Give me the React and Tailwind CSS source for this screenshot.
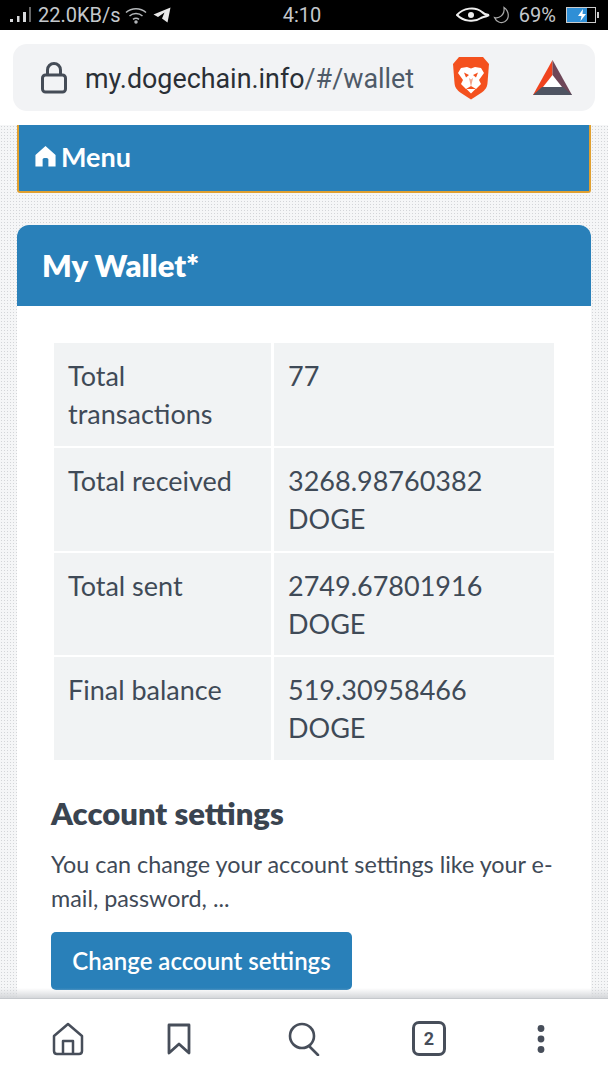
const rows = [
  ["Total transactions", "77"],
  ["Total received", "3268.98760382 DOGE"],
  ["Total sent", "2749.67801916 DOGE"],
  ["Final balance", "519.30958466 DOGE"],
];

function StatusBar() {
  return (
    <div className="h-[30px] shrink-0 bg-black text-[#c4c8cc] flex items-center justify-between pl-[9px] pr-[9px] text-[20px] font-['Roboto',sans-serif]">
      <div className="flex items-center w-[240px]">
        {/* signal */}
        <svg width="24" height="18" viewBox="0 0 24 18" className="mr-[5px]">
          <rect x="1" y="13" width="3" height="3" fill="#d8dadc" />
          <rect x="8" y="10" width="2.5" height="6" fill="#d8dadc" />
          <rect x="14" y="6" width="3" height="10" fill="#d8dadc" />
          <rect x="20" y="1" width="2" height="15" fill="#666" />
        </svg>
        <span>22.0KB/s</span>
        {/* wifi */}
        <svg width="22" height="18" viewBox="0 0 22 18" fill="none" stroke="#b5b8bb" strokeWidth="1.5" className="ml-[4px]">
          <path d="M1 6.5C6.5 1.5 15.5 1.5 21 6.5" />
          <path d="M4.5 10c3.6-3.2 9.4-3.2 13 0" />
          <path d="M8 13.4c1.7-1.4 4.3-1.4 6 0" />
          <circle cx="11" cy="16" r="1" fill="#b5b8bb" />
        </svg>
        {/* telegram */}
        <svg width="18" height="16" viewBox="0 0 18 16" className="ml-[6px]">
          <path d="M0.5 7.5L17.5 0.5L14.5 15.5L9 11.5L11.5 5.5L5 10Z" fill="#e8e8e8" />
        </svg>
      </div>
      <span className="-ml-[4px]">4:10</span>
      <div className="flex items-center justify-end w-[240px]">
        {/* eye */}
        <svg width="34" height="18" viewBox="0 0 34 18" fill="none" stroke="#eee" strokeWidth="2">
          <path d="M1 9C7 2 19 0 26 6C28 8 30 9 33 9C29 11 27 11 25 12C18 17 7 15 1 9Z" />
          <circle cx="15" cy="9" r="3" fill="#eee" stroke="none" />
        </svg>
        <svg width="18" height="18" viewBox="0 0 18 18" fill="none" stroke="#aaa" strokeWidth="1.2" className="ml-[3px]">
          <path d="M11 1.5C16 5 17 12 12 15.5C8 18 3 15.5 1.5 11.5C6 13 12 9 11 1.5Z" />
        </svg>
        <span className="ml-[8px]">69%</span>
        {/* battery */}
        <div className="flex items-center ml-[10px]">
          <div className="relative w-[30px] h-[16px] border border-[#ccc] bg-black">
            <div className="h-full w-[20px] bg-[#2f8fd6]" />
            <svg width="10" height="12" viewBox="0 0 10 12" className="absolute left-[10px] top-[1px]">
              <path d="M6 0L1 7H4.5L3.5 12L9 5H5.5Z" fill="#fff" />
            </svg>
          </div>
          <div className="w-[2px] h-[6px] bg-[#ccc] ml-[1px]" />
        </div>
      </div>
    </div>
  );
}

function BraveLogo() {
  return (
    <svg width="38" height="44" viewBox="0 0 38 44">
      <path d="M7 1H31L37 8L35.5 27C35 32 33 34 29 37L19 43.5L9 37C5 34 3 32 2.5 27L1 8Z" fill="#f4511e" />
      <path d="M9 12L15 11L19 12.5L23 11L29 12L32 17L27 24L29 28L24 33L19 30L14 33L9 28L11 24L6 17Z" fill="#fff" />
      <path d="M12 16.5L17 19L14 21.5ZM26 16.5L21 19L24 21.5Z" fill="#f4511e" />
      <path d="M17 22L19 31L21 22L19 23.5Z" fill="#f4a58c" />
      <path d="M14.5 33H23.5L19 37.5Z" fill="#fff" />
    </svg>
  );
}

function BatLogo() {
  return (
    <svg width="40" height="36" viewBox="0 0 40 36">
      <path d="M19.5 0L0 35H10L19.5 17Z" fill="#f0431e" />
      <path d="M19.5 0L39 35H29L19.5 17Z" fill="#6e4658" />
      <path d="M0 35L9 27H30L39 35Z" fill="#4f5462" />
      <path d="M19.5 15L10 27H29Z" fill="#fff" />
    </svg>
  );
}

function AddressBar() {
  return (
    <div className="h-[95px] shrink-0 bg-white pt-[14px] px-[13px]">
      <div className="h-[67px] rounded-[14px] bg-[#f2f3f5] flex items-center pl-[28px] font-['Roboto',sans-serif]">
        <svg width="26" height="32" viewBox="0 0 26 32" fill="none" stroke="#454c57" strokeWidth="3">
          <rect x="1.5" y="13" width="23" height="17" rx="3" />
          <path d="M6.5 13V8a6.5 6.5 0 0 1 13 0v5" />
        </svg>
        <span className="ml-[18px] mt-[3px] text-[26.85px] text-[#2a2f36]">
          my.dogechain.info<span className="text-[#4e5a68]">/#/wallet</span>
        </span>
        <div className="ml-[38px] flex items-center">
          <BraveLogo />
          <div className="ml-[43px]">
            <BatLogo />
          </div>
        </div>
      </div>
    </div>
  );
}

function Content() {
  return (
    <div className="relative flex-1 min-h-0 overflow-hidden px-[17px] bg-[#f5f6f7] bg-[radial-gradient(#d3d5d8_0.7px,transparent_0.8px)] bg-[size:3px_3px] font-['Lato',sans-serif]">
      <div className="h-[68px] bg-[#2980b9] border-l-2 border-r-2 border-b-2 border-[#e0a030] rounded-b-[3px] flex items-center pl-[15px] pb-[2px] text-white">
        <svg width="23" height="24" viewBox="0 0 24 24" fill="#fff" className="-mt-[2px]">
          <path d="M12 1.5L1.5 11V23H9V15.5C9 13.5 15 13.5 15 15.5V23H22.5V11Z" />
        </svg>
        <span className="ml-[4px] text-[27px] font-bold">Menu</span>
      </div>

      <div className="mt-[32px] rounded-t-[12px] bg-white overflow-hidden">
        <div className="h-[81px] bg-[#2980b9] flex items-center pl-[25px]">
          <h1 className="text-[31px] font-extrabold text-white">My Wallet*</h1>
        </div>
        <div className="px-[34px] pt-[37px] pb-[40px] text-[#3f4a57]">
          <div className="ml-[3px] w-[500px] grid grid-cols-[217px_280px] gap-x-[3px] gap-y-[2px]">
            {rows.map(([label, value]) => (
              <div key={label} className="contents">
                <div className="h-[102.8px] bg-[#f1f3f4] pl-[14px] pt-[14px] text-[27px] leading-[38px]">{label}</div>
                <div className="h-[102.8px] bg-[#f1f3f4] pl-[14px] pr-[40px] pt-[14px] text-[27px] leading-[38px]">{value}</div>
              </div>
            ))}
          </div>
          <h2 className="mt-[31px] text-[31px] leading-[44px] font-extrabold text-[#3a4450]">Account settings</h2>
          <p className="mt-[12px] text-[23.35px] leading-[34px]">
            You can change your account settings like your e-mail, password, ...
          </p>
          <button className="mt-[17px] h-[58px] w-[301px] rounded-[5px] bg-[#2980b9] text-white text-[24px] font-semibold">
            Change account settings
          </button>
        </div>
      </div>

      {/* fade above the bottom bar */}
      <div className="absolute inset-x-0 bottom-0 h-[10px] bg-gradient-to-b from-transparent to-[#d5d7da]" />
    </div>
  );
}

function BottomNav() {
  return (
    <div className="h-[82px] shrink-0 bg-white border-t border-[#c5c8cc] flex items-center pl-[52px] pb-[2px]">
      <svg width="32" height="34" viewBox="0 0 32 34" fill="none" stroke="#474e5a" strokeWidth="2.5" strokeLinejoin="round">
        <path d="M2 14L16 2L30 14V29C30 31 29 32 27 32H5C3 32 2 31 2 29Z" />
        <path d="M11 32V19H21V32" />
      </svg>
      <svg width="24" height="32" viewBox="0 0 24 32" fill="none" stroke="#474e5a" strokeWidth="2.8" strokeLinejoin="round" className="ml-[83px]">
        <path d="M2 2H22V30L12 21L2 30Z" />
      </svg>
      <svg width="32" height="34" viewBox="0 0 32 34" fill="none" stroke="#474e5a" strokeWidth="2.6" strokeLinecap="round" className="ml-[97px]">
        <circle cx="14" cy="14" r="12" />
        <path d="M22 25L30 33" />
      </svg>
      <div className="ml-[92px] w-[34px] h-[35px] rounded-[7px] border-[3px] border-[#474e5a] flex items-center justify-center text-[18px] font-bold text-[#474e5a] font-['Roboto',sans-serif]">
        2
      </div>
      <svg width="8" height="30" viewBox="0 0 8 30" fill="#474e5a" className="ml-[91px]">
        <circle cx="4" cy="4.5" r="3.4" />
        <circle cx="4" cy="15" r="3.4" />
        <circle cx="4" cy="25.5" r="3.4" />
      </svg>
    </div>
  );
}

export default function App() {
  return (
    <div className="h-[1080px] w-[608px] overflow-hidden flex flex-col">
      <StatusBar />
      <AddressBar />
      <Content />
      <BottomNav />
    </div>
  );
}
